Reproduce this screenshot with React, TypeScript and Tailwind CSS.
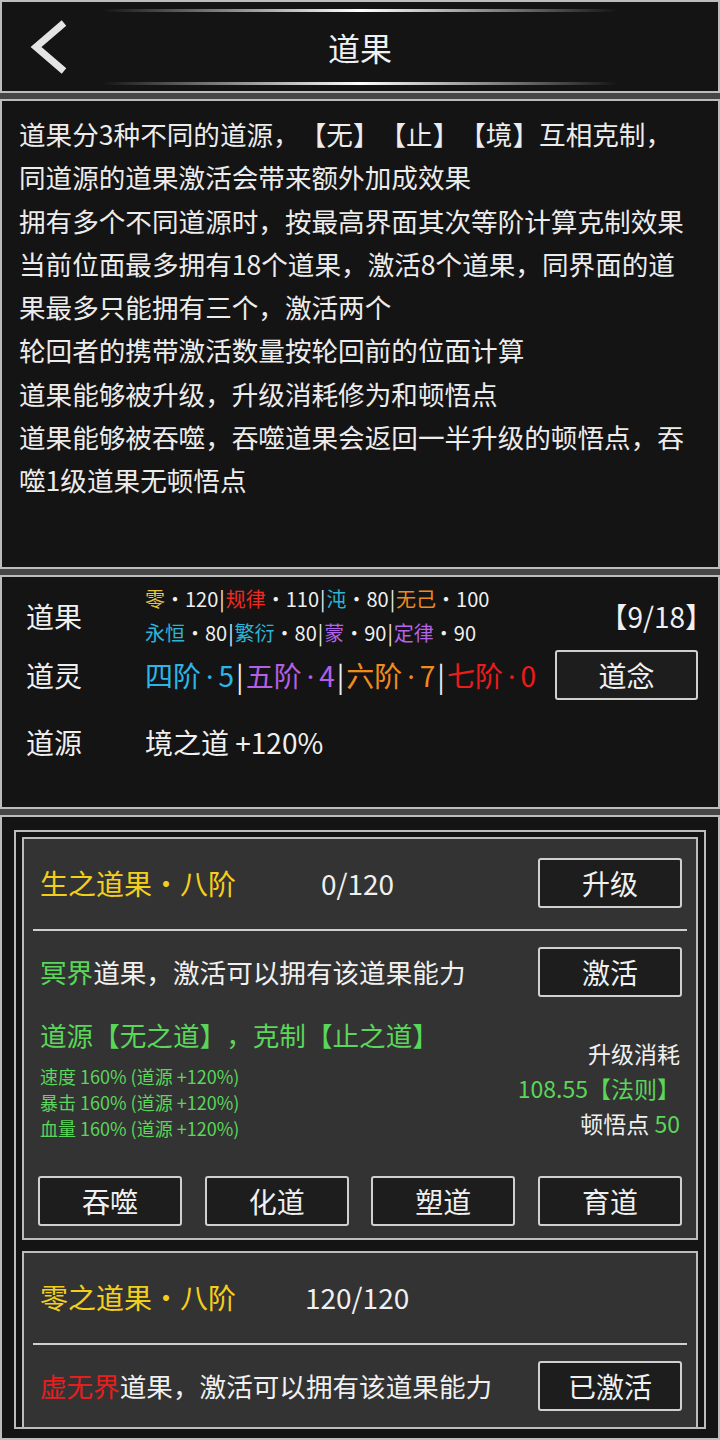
import type { ReactNode } from 'react'

const intro = [
  '道果分3种不同的道源，【无】【止】【境】互相克制，',
  '同道源的道果激活会带来额外加成效果',
  '拥有多个不同道源时，按最高界面其次等阶计算克制效果',
  '当前位面最多拥有18个道果，激活8个道果，同界面的道',
  '果最多只能拥有三个，激活两个',
  '轮回者的携带激活数量按轮回前的位面计算',
  '道果能够被升级，升级消耗修为和顿悟点',
  '道果能够被吞噬，吞噬道果会返回一半升级的顿悟点，吞',
  '噬1级道果无顿悟点',
]

const fruitRow1 = [
  { name: '零', value: '120', color: 'text-[#e8c63a]' },
  { name: '规律', value: '110', color: 'text-[#ee2a22]' },
  { name: '沌', value: '80', color: 'text-[#2bb5d8]' },
  { name: '无己', value: '100', color: 'text-[#ee8a1f]' },
]

const fruitRow2 = [
  { name: '永恒', value: '80', color: 'text-[#2bb5d8]' },
  { name: '繁衍', value: '80', color: 'text-[#2bb5d8]' },
  { name: '蒙', value: '90', color: 'text-[#b263e6]' },
  { name: '定律', value: '90', color: 'text-[#b263e6]' },
]

const spirits = [
  { name: '四阶', value: '5', color: 'text-[#2cb6e8]' },
  { name: '五阶', value: '4', color: 'text-[#b45fe8]' },
  { name: '六阶', value: '7', color: 'text-[#f08c1c]' },
  { name: '七阶', value: '0', color: 'text-[#ea1c1c]' },
]

function Btn({ children }: { children: ReactNode }) {
  return (
    <div className="flex h-[50px] w-[144px] items-center justify-center rounded-[3px] border-2 border-[#d0d0d0] bg-[#1d1d1d] text-[28px] text-[#f0f0f0]">
      {children}
    </div>
  )
}

function FruitLine({ items }: { items: typeof fruitRow1 }) {
  return (
    <div className="flex h-[34px] items-center whitespace-nowrap text-[20px] text-[#f0f0f0]">
      {items.map((it, i) => (
        <span key={it.name} className="flex items-center">
          {i > 0 && <span className="mx-[1px]">|</span>}
          <span className={it.color}>{it.name}</span>
          <span>·{it.value}</span>
        </span>
      ))}
    </div>
  )
}

function Card({
  title,
  progress,
  progressX,
  realm,
  realmColor,
  upgrade,
  action,
  children,
}: {
  title: string
  progress: string
  progressX: string
  realm: string
  realmColor: string
  upgrade: boolean
  action: string
  children?: ReactNode
}) {
  return (
    <div className="shrink-0 border-2 border-[#bdbdbd] bg-[#333333] px-[9px]">
      <div className="flex h-[90px] items-center pb-[2px] pl-[7px] pr-[5px]">
        <span className={`${progressX} whitespace-nowrap text-[28px] text-[#f3cf1c]`}>{title}</span>
        <span className="text-[28px] text-[#f0f0f0]">{progress}</span>
        {upgrade && (
          <div className="ml-auto">
            <Btn>升级</Btn>
          </div>
        )}
      </div>
      <div className="h-[2px] bg-[#cfcfcf]" />
      <div className="mt-[16px] flex h-[50px] items-center pl-[7px] pr-[5px] text-[26.6px] text-[#f0f0f0]">
        <span className="whitespace-nowrap">
          <span className={realmColor}>{realm}</span>道果，激活可以拥有该道果能力
        </span>
        <div className="ml-auto">
          <Btn>{action}</Btn>
        </div>
      </div>
      {children}
    </div>
  )
}

export default function App() {
  return (
    <div className="flex h-[1440px] w-[720px] flex-col gap-[6px] overflow-hidden bg-[#464646] font-['Noto_Sans_CJK_SC',sans-serif] text-[#f0f0f0] [text-spacing-trim:space-all]">
      {/* Header */}
      <div className="flex h-[93px] shrink-0 flex-col items-center border-2 border-[#bdbdbd] bg-[#141414]">
        <div className="mt-[7px] h-[3px] w-[516px] rounded-full bg-linear-to-r from-transparent via-white to-transparent" />
        <div className="grid h-[70px] w-full grid-cols-[1fr_auto_1fr] items-center">
          <div className="pl-[26px]">
            <svg width="40" height="54" viewBox="0 0 40 54" fill="none">
              <polyline points="36,3 8,27 36,51" stroke="#e4e4e4" strokeWidth="7" strokeLinejoin="miter" />
            </svg>
          </div>
          <div className="text-[32px] leading-none">道果</div>
          <div />
        </div>
        <div className="h-[3px] w-[516px] rounded-full bg-linear-to-r from-transparent via-white to-transparent" />
      </div>

      {/* Intro */}
      <div className="h-[470px] shrink-0 border-2 border-[#bdbdbd] bg-[#141414] pl-[17px] pt-[11px] text-[26.6px] leading-[43.3px] text-[#ececec]">
        {intro.map((l) => (
          <div key={l} className="whitespace-nowrap">
            {l}
          </div>
        ))}
      </div>

      {/* Summary */}
      <div className="h-[234px] shrink-0 border-2 border-[#bdbdbd] bg-[#141414] pl-[24px] pr-[20px] pt-[5px]">
        <div className="flex h-[68px] items-center">
          <div className="w-[119px] shrink-0 text-[28px]">道果</div>
          <div className="flex flex-col">
            <FruitLine items={fruitRow1} />
            <FruitLine items={fruitRow2} />
          </div>
          <div className="-mr-[15px] ml-auto text-[28px]">【9/18】</div>
        </div>
        <div className="flex h-[50px] items-center">
          <div className="w-[119px] shrink-0 text-[28px]">道灵</div>
          <div className="flex items-center whitespace-nowrap text-[28px]">
            {spirits.map((s, i) => (
              <span key={s.name} className="flex items-center">
                {i > 0 && <span className="mx-[2px] text-[#f0f0f0]">|</span>}
                <span className={s.color}>
                  {s.name}
                  <span className="mx-[5px] font-['Noto_Sans',sans-serif]">·</span>
                  {s.value}
                </span>
              </span>
            ))}
          </div>
          <div className="ml-auto">
            <div className="flex h-[50px] w-[143px] items-center justify-center rounded-[3px] border-2 border-[#d0d0d0] bg-[#1d1d1d] text-[28px]">
              道念
            </div>
          </div>
        </div>
        <div className="mt-[22px] flex h-[40px] items-center">
          <div className="w-[119px] shrink-0 text-[28px]">道源</div>
          <div className="text-[28px]">境之道 +120%</div>
        </div>
      </div>

      {/* Fruit list */}
      <div className="flex min-h-0 flex-1 flex-col border-2 border-[#bdbdbd] bg-[#141414] px-[12px] pb-[9px] pt-[13px]">
        <div className="flex min-h-0 flex-1 flex-col gap-[11px] overflow-hidden border-2 border-[#bdbdbd] px-[6px] pt-[5px]">
          <Card
            title="生之道果·八阶"
            progress="0/120"
            progressX="w-[281px]"
            realm="冥界"
            realmColor="text-[#5ad65a]"
            upgrade
            action="激活"
          >
            <div className="flex justify-between pl-[7px] pr-[7px]">
              <div className="text-[#5ad65a]">
                <div className="mt-[20px] whitespace-nowrap text-[26.6px] leading-[36px]">道源【无之道】，克制【止之道】</div>
                <div className="mt-[10px] text-[18px] leading-[26px]">
                  <div>速度 160% (道源 +120%)</div>
                  <div>暴击 160% (道源 +120%)</div>
                  <div>血量 160% (道源 +120%)</div>
                </div>
              </div>
              <div className="pt-[39px] text-right text-[23px] leading-[35px]">
                <div>升级消耗</div>
                <div className="text-[#5ad65a]">108.55【法则】</div>
                <div>
                  顿悟点 <span className="text-[#5ad65a]">50</span>
                </div>
              </div>
            </div>
            <div className="mt-[35px] flex justify-between px-[5px] pb-[12px]">
              <Btn>吞噬</Btn>
              <Btn>化道</Btn>
              <Btn>塑道</Btn>
              <Btn>育道</Btn>
            </div>
          </Card>
          <Card
            title="零之道果·八阶"
            progress="120/120"
            progressX="w-[265px]"
            realm="虚无界"
            realmColor="text-[#e61e1e]"
            upgrade={false}
            action="已激活"
          >
            <div className="h-[40px]" />
          </Card>
        </div>
      </div>
    </div>
  )
}
